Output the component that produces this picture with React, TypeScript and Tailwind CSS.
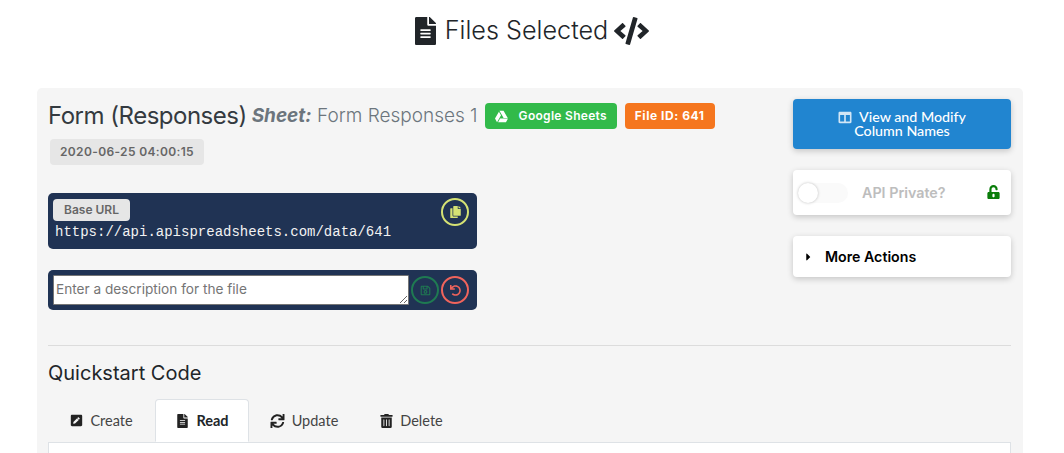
import React from "react";
import { FaFileAlt, FaCode, FaGoogleDrive, FaCopy, FaRegSave, FaUndo, FaColumns, FaUnlockAlt, FaCaretRight, FaPenSquare, FaSync, FaTrashAlt } from "react-icons/fa";

function Tab({ icon, label, active, w }: { icon: React.ReactNode; label: string; active?: boolean; w: string }) {
  return (
    <div
      className={
        active
          ? `${w} h-[43px] -mb-px flex items-center justify-center gap-[8px] pl-[2px] bg-white border border-[#dee2e6] border-b-white rounded-t-[4px] text-[14.5px] font-bold text-[#212529]`
          : `${w} h-[43px] flex items-center justify-center gap-[7px] text-[14.5px] text-[#444]`
      }
    >
      {icon}
      <span>{label}</span>
    </div>
  );
}

export default function App() {
  return (
    <div className="h-screen overflow-hidden bg-white text-[#212529] font-['Inter',sans-serif]">
      <div className="h-[88px] pt-[12px] flex justify-center">
        <div className="flex items-center h-[38px] gap-[8px] text-[25.2px] font-light text-[#212529]">
          <FaFileAlt className="w-[21px] h-[28px]" />
          <span className="ml-[1px]">Files Selected</span>
          <FaCode className="w-[35px] h-[28px] -ml-[2px]" />
        </div>
      </div>
      <div className="ml-[37px] w-[986px] rounded-[5px] bg-[#f5f5f5] pl-[11px] pr-[12px] pt-[13px] h-[400px]">
        <div className="flex">
          <div className="w-[745px] shrink-0">
            <div className="flex flex-wrap items-center gap-y-[7px]">
              <span className="text-[24px] leading-[30px] font-normal text-[#343a40] tracking-[-0.5px]">Form (Responses)</span>
              <span className="ml-[5px] text-[19px] leading-[30px] text-[#6c757d] font-light">
                <b className="font-bold italic">Sheet:</b> Form Responses 1
              </span>
              <span className="ml-[7px] h-[26px] w-[132px] flex items-center rounded-[4px] bg-[#32ba4a] text-white text-[12px] font-semibold pl-[10px] tracking-[0.3px]">
                <FaGoogleDrive className="w-[13px] h-[13px]" />
                <span className="ml-[11px]">Google Sheets</span>
              </span>
              <span className="ml-[8px] h-[26px] w-[90px] flex items-center justify-center rounded-[4px] bg-[#f5761e] text-white text-[12px] font-bold tracking-[0.55px]">File ID: 641</span>
              <span className="w-full">
                <span className="ml-[2px] inline-flex h-[26px] w-[154px] items-center justify-center rounded-[4px] bg-[#e6e6e6] text-[#666] text-[12px] font-semibold tracking-[0.35px]">2020-06-25 04:00:15</span>
              </span>
            </div>
            <div className="mt-[28px] w-[429px] h-[56px] rounded-[5px] bg-[#203354] pl-[5px] pt-[6px] pr-[8px] relative">
              <span className="flex h-[22px] w-[77px] items-center justify-center rounded-[4px] bg-[#e6e6e6] text-[#666] text-[12px] font-semibold">Base URL</span>
              <div className="font-['Liberation_Mono',monospace] text-[14px] leading-[17px] text-[#f2f2f2] pl-[2px] mt-[3px]">https://api.apispreadsheets.com/data/641</div>
              <div className="absolute right-[8px] top-[5px] w-[28px] h-[28px] rounded-full border-[2px] border-[#d5e274] flex items-center justify-center text-[#d5e274]">
                <FaCopy className="w-[11px] h-[12px]" />
              </div>
            </div>
            <div className="mt-[21px] w-[429px] h-[40px] rounded-[5px] bg-[#203354] flex items-center pl-[5px] pr-[8px] gap-[2px]">
              <textarea
                readOnly
                placeholder="Enter a description for the file"
                className="w-[356px] shrink-0 h-[30px] bg-white border border-[#767676] rounded-[1px] px-[2px] py-[3px] text-[13.65px] leading-[20px] text-[#333] placeholder:text-[#757575] outline-none"
                style={{ fontFamily: "Inter, sans-serif" }}
              />
              <div className="w-[28px] h-[28px] rounded-full border-[2px] border-[#1f7a52] flex items-center justify-center text-[#1f7a52]">
                <FaRegSave className="w-[11px] h-[11px]" />
              </div>
              <div className="w-[28px] h-[28px] rounded-full border-[2px] border-[#f0645c] flex items-center justify-center text-[#f0645c]">
                <FaUndo className="w-[11px] h-[11px]" />
              </div>
            </div>
          </div>
          <div className="w-[218px] shrink-0 -mt-[2px]">
            <div className="h-[50px] rounded-[4px] bg-[#2185d0] text-white text-[14.25px] leading-[14px] font-medium text-center flex items-center justify-center shadow-[0_2px_6px_rgba(0,0,0,0.2)] font-['Lato',sans-serif]">
              <div>
                <div className="flex items-center justify-center">
                  <FaColumns className="w-[14px] h-[13px] mr-[7px] opacity-80" />
                  View and Modify
                </div>
                <div>Column Names</div>
              </div>
            </div>
            <div className="mt-[21px] h-[45px] rounded-[4px] bg-white flex items-center shadow-[0_2px_6px_rgba(0,0,0,0.2)] relative">
              <div className="ml-[5px] w-[50px] h-[20px] rounded-full bg-[#fafafa] relative">
                <div className="w-[20px] h-[20px] rounded-full bg-white shadow-[0_0_3px_rgba(0,0,0,0.25)]" />
              </div>
              <span className="ml-[14px] text-[14.3px] font-semibold text-[#bdbdbd]">API Private?</span>
              <FaUnlockAlt className="absolute right-[11px] top-[15px] w-[13px] h-[14px] text-[#0a7d0a]" />
            </div>
            <div className="mt-[21px] h-[41px] rounded-[4px] bg-white flex items-center shadow-[0_2px_6px_rgba(0,0,0,0.2)] pl-[11px]">
              <FaCaretRight className="w-[9px] h-[12px] text-black" />
              <span className="ml-[12px] text-[14.2px] font-semibold text-black">More Actions</span>
            </div>
          </div>
        </div>
        <div className="mt-[35px] h-px bg-[#dcdcdc]" />
        <div className="mt-[15px] text-[20px] leading-[24px] font-normal text-[#212529]">Quickstart Code</div>
        <div className="mt-[14px] border-b border-[#dee2e6] flex font-['Lato',sans-serif]">
          <Tab w="w-[107px]" label="Create" icon={<FaPenSquare className="w-[13px] h-[13px] text-[#222]" />} />
          <Tab w="w-[94px]" active label="Read" icon={<FaFileAlt className="w-[11px] h-[14px] text-[#222]" />} />
          <Tab w="w-[110px]" label="Update" icon={<FaSync className="w-[15px] h-[14px] text-[#222]" />} />
          <Tab w="w-[105px]" label="Delete" icon={<FaTrashAlt className="w-[13px] h-[14px] text-[#222]" />} />
        </div>
        <div className="h-[40px] bg-white border-x border-[#dee2e6]" />
      </div>
    </div>
  );
}
